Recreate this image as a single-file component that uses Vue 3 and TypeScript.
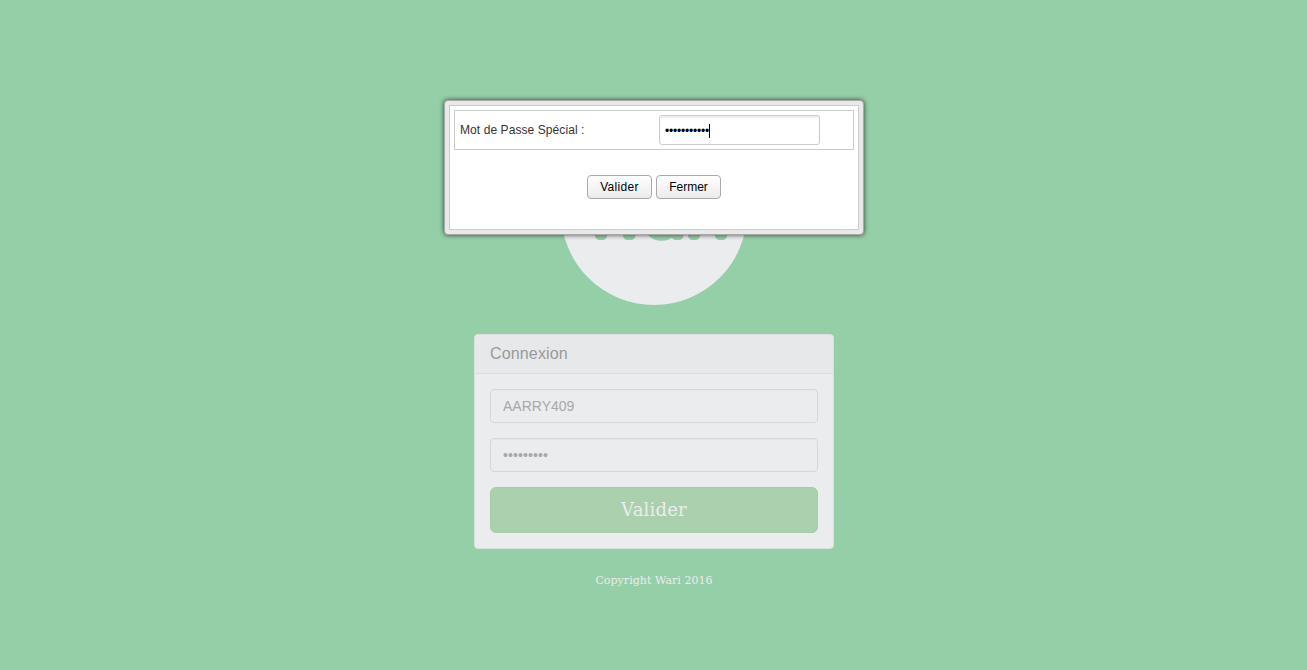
<script setup lang="ts">
import { ref } from 'vue'

const username = ref('AARRY409')
const password = ref('motpasse1')
const specialPassword = ref('motspecial1')
const dialogOpen = ref(true)
</script>

<template>
  <div class="page">
    <main class="login">
      <svg class="logo" viewBox="0 0 186 186" aria-label="wari">
        <circle cx="93" cy="93" r="93" fill="#ebecee" />
        <g fill="#95cfa8">
          <rect x="34" y="76" width="12" height="45" rx="4.500" />
          <rect x="62" y="76" width="12.500" height="45" rx="4.500" />
          <rect x="110.500" y="76" width="12" height="45" rx="4.500" />
          <rect x="127" y="76" width="12" height="45" rx="4.500" />
          <rect x="154" y="76" width="12" height="45" rx="4.500" />
        </g>
        <g fill="none" stroke="#95cfa8" stroke-width="12">
          <circle cx="100.500" cy="103" r="12.800" />
          <path d="M133 90Q133 80 147 80" />
        </g>
      </svg>

      <section class="panel">
        <header class="panel-heading">Connexion</header>
        <form class="panel-body" @submit.prevent>
          <input v-model="username" class="field" type="text" />
          <input v-model="password" class="field field-password" type="password" />
          <button class="submit" type="submit">Valider</button>
        </form>
      </section>

      <footer class="copyright">Copyright Wari 2016</footer>
    </main>

    <div v-if="dialogOpen" class="dialog" role="dialog">
      <div class="dialog-content">
        <div class="row">
          <label class="row-label" for="special">Mot de Passe Spécial :</label>
          <div class="special-wrap">
            <input id="special" v-model="specialPassword" class="special" type="password" />
            <span class="caret"></span>
          </div>
        </div>
        <div class="actions">
          <button class="action action-submit" type="button">Valider</button>
          <button class="action" type="button" @click="dialogOpen = false">Fermer</button>
        </div>
      </div>
    </div>
  </div>
</template>

<style>
body {
  margin: 0;
  background: #95cfa8;
}
</style>

<style scoped>
.page,
.page * {
  box-sizing: border-box;
}
.page {
  position: relative;
  height: 670px;
  overflow: hidden;
  background: #95cfa8;
  font-family: "Liberation Sans", Arial, sans-serif;
}
.login {
  display: flex;
  flex-direction: column;
  align-items: center;
  width: 360px;
  margin: 0 auto 0 474px;
  padding-top: 119px;
}
.logo {
  display: block;
  width: 186px;
  height: 186px;
  margin-bottom: 29px;
}
.panel {
  width: 360px;
  height: 215px;
  border: 1px solid #dcdfdf;
  border-radius: 4px;
  background: #ebecee;
  overflow: hidden;
}
.panel-heading {
  height: 39px;
  padding: 0 15px;
  border-bottom: 1px solid #dcdddf;
  background: #e7e8ea;
  color: #999a9b;
  font-size: 16px;
  letter-spacing: 0.15px;
  line-height: 38px;
}
.panel-body {
  display: flex;
  flex-direction: column;
  gap: 15px;
  padding: 15px;
}
.field {
  width: 100%;
  height: 34px;
  margin: 0;
  padding: 6px 12px;
  border: 1px solid #d5d7d9;
  border-radius: 4px;
  outline: none;
  background: #ebecee;
  box-shadow: inset 0 1px 1px rgba(0, 0, 0, 0.03);
  color: #a7a8a9;
  font: 14px/20px "Liberation Sans", Arial, sans-serif;
}
.field-password {
  letter-spacing: 0.1px;
}
.submit {
  height: 46px;
  margin: 0;
  padding: 0;
  border: 1px solid #a4cda8;
  border-radius: 6px;
  background: #abd0ad;
  color: #ebecee;
  font: 18px/24px "DejaVu Serif", serif;
  letter-spacing: 0.2px;
}
.copyright {
  margin-top: 24px;
  color: #ebecee;
  font: 11px/16px "DejaVu Serif", serif;
  letter-spacing: 0.05px;
}
.dialog {
  position: absolute;
  top: 100px;
  left: 444px;
  width: 420px;
  height: 135px;
  padding: 4px;
  border: 1px solid #a8a8a8;
  border-radius: 4px;
  background: #e9e9e9;
  box-shadow: 0 0 5px rgba(0, 0, 0, 0.7);
}
.dialog-content {
  height: 125px;
  padding: 4px;
  border: 1px solid #cccccc;
  background: #fff;
}
.row {
  display: flex;
  align-items: center;
  height: 40px;
  padding-left: 5px;
  border: 1px solid #cccccc;
}
.row-label {
  width: 199px;
  color: #333;
  font-size: 12px;
  letter-spacing: 0.08px;
  line-height: 16px;
}
.special-wrap {
  position: relative;
  width: 161px;
  height: 30px;
}
.special {
  display: block;
  width: 161px;
  height: 30px;
  margin: 0;
  padding: 2px 5px 0;
  border: 1px solid #ccc;
  border-radius: 3px;
  outline: none;
  background: #fff;
  box-shadow: inset 0 2px 2px #ededed;
  color: #000;
  font: 12px/16px "Liberation Sans", Arial, sans-serif;
  letter-spacing: -0.2px;
}
.caret {
  position: absolute;
  top: 9px;
  left: 50px;
  width: 1px;
  height: 14px;
  background: #000;
}
.actions {
  display: flex;
  justify-content: center;
  gap: 4px;
  margin-top: 25px;
}
.action {
  width: 65px;
  height: 24px;
  margin: 0;
  padding: 0;
  border: 1px solid #aaa;
  border-radius: 4px;
  background: linear-gradient(#fff, #ebebeb);
  color: #000;
  font: 12px/16px "Liberation Sans", Arial, sans-serif;
}
.action-submit {
  letter-spacing: 0.3px;
}
</style>
